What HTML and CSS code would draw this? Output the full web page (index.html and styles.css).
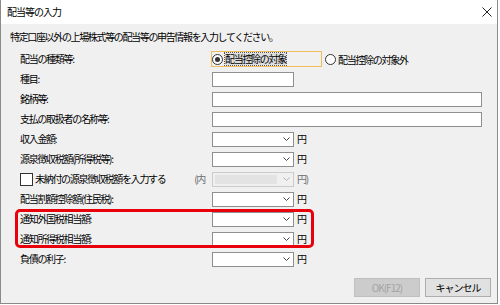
FILE: index.html
```html
<!DOCTYPE html>
<html lang="ja">
<head>
  <meta charset="UTF-8" />
  <title>配当等の入力</title>
  <link rel="stylesheet" href="styles.css">
</head>
<body>
  <div class="window">
    <div class="titlebar">
      <span class="title">配当等の入力</span>
      <span class="close">
        <svg width="10" height="10" viewBox="0 0 10 10"><path d="M0.5 0.5 L9.5 9.5 M9.5 0.5 L0.5 9.5" stroke="#222" stroke-width="1" fill="none"/></svg>
      </span>
    </div>

    <div class="client">
      <p class="desc">特定口座以外の上場株式等の配当等の申告情報を入力してください。</p>

      <div class="form">
        <div class="row">
          <div class="lbl">配当の種類等:</div>
          <div class="ctl">
            <span class="radio-box">
              <span class="radio checked"></span>
              <span class="focus-text">配当控除の対象</span>
            </span>
            <span class="radio-item">
              <span class="radio"></span>
              <span>配当控除の対象外</span>
            </span>
          </div>
        </div>

        <div class="row">
          <div class="lbl">種目:</div>
          <div class="ctl"><span class="input short"></span></div>
        </div>

        <div class="row">
          <div class="lbl">銘柄等:</div>
          <div class="ctl"><span class="input long"></span></div>
        </div>

        <div class="row">
          <div class="lbl">支払の取扱者の名称等:</div>
          <div class="ctl"><span class="input long"></span></div>
        </div>

        <div class="row">
          <div class="lbl">収入金額:</div>
          <div class="ctl"><span class="combo"><span class="chev"><svg width="7" height="4" viewBox="0 0 7 4"><polyline points="0.5,0.5 3.5,3.5 6.5,0.5" fill="none" stroke="#444"/></svg></span></span><span class="yen">円</span></div>
        </div>

        <div class="row">
          <div class="lbl">源泉徴収税額(所得税等):</div>
          <div class="ctl"><span class="combo"><span class="chev"><svg width="7" height="4" viewBox="0 0 7 4"><polyline points="0.5,0.5 3.5,3.5 6.5,0.5" fill="none" stroke="#444"/></svg></span></span><span class="yen">円</span></div>
        </div>

        <div class="row">
          <div class="lbl check-lbl">
            <span class="checkbox"></span>
            <span>未納付の源泉徴収税額を入力する</span>
            <span class="inner">(内</span>
          </div>
          <div class="ctl"><span class="combo disabled"><span class="fill"></span><span class="chev"><svg width="7" height="4" viewBox="0 0 7 4"><polyline points="0.5,0.5 3.5,3.5 6.5,0.5" fill="none" stroke="#b5b5b5"/></svg></span></span><span class="yen muted">円)</span></div>
        </div>

        <div class="row">
          <div class="lbl">配当割額控除額(住民税):</div>
          <div class="ctl"><span class="combo"><span class="chev"><svg width="7" height="4" viewBox="0 0 7 4"><polyline points="0.5,0.5 3.5,3.5 6.5,0.5" fill="none" stroke="#444"/></svg></span></span><span class="yen">円</span></div>
        </div>

        <div class="row">
          <div class="lbl">通知外国税相当額:</div>
          <div class="ctl"><span class="combo"><span class="chev"><svg width="7" height="4" viewBox="0 0 7 4"><polyline points="0.5,0.5 3.5,3.5 6.5,0.5" fill="none" stroke="#444"/></svg></span></span><span class="yen">円</span></div>
        </div>

        <div class="row">
          <div class="lbl">通知所得税相当額:</div>
          <div class="ctl"><span class="combo"><span class="chev"><svg width="7" height="4" viewBox="0 0 7 4"><polyline points="0.5,0.5 3.5,3.5 6.5,0.5" fill="none" stroke="#444"/></svg></span></span><span class="yen">円</span></div>
        </div>

        <div class="row">
          <div class="lbl">負債の利子:</div>
          <div class="ctl"><span class="combo"><span class="chev"><svg width="7" height="4" viewBox="0 0 7 4"><polyline points="0.5,0.5 3.5,3.5 6.5,0.5" fill="none" stroke="#444"/></svg></span></span><span class="yen">円</span></div>
        </div>

        <!-- annotation around the two tax rows -->
        <div class="mark"></div>
      </div>

      <div class="buttons">
        <button class="btn" disabled>OK(F12)</button>
        <button class="btn">キャンセル</button>
      </div>
    </div>
  </div>
</body>
</html>
```

FILE: styles.css
```css
body {
  margin: 0;
  background-color: #ffffff;
  font-family: "Noto Sans CJK JP", "Noto Sans", sans-serif;
  font-size: 10px;
  letter-spacing: -1.3px;
  color: #000;
}

.window {
  width: 496px;
  height: 303px;
  border: 1px solid #8a8a8a;
  border-top: none;
  background-color: #f0f0f0;
  display: flex;
  flex-direction: column;
}

.titlebar {
  height: 24px;
  background-color: #ffffff;
  display: flex;
  align-items: center;
  justify-content: space-between;
  padding: 0 5px 0 6px;
}

.title {
  line-height: 14px;
  letter-spacing: -1px;
}

.close {
  display: flex;
  width: 10px;
  height: 10px;
}

.client {
  flex: 1;
  display: flex;
  flex-direction: column;
}

.desc {
  margin: 6px 0 0 9px;
  line-height: 14px;
  letter-spacing: -1.35px;
}

.form {
  position: relative;
  margin-top: 5px;
  padding-left: 19px;
}

.row {
  display: grid;
  grid-template-columns: 192px 1fr;
  height: 20px;
  align-items: center;
}

.lbl {
  line-height: 14px;
  white-space: nowrap;
}

.ctl {
  display: flex;
  align-items: center;
}

.input,
.combo {
  display: block;
  box-sizing: border-box;
  height: 15px;
  background-color: #fff;
  border: 1px solid #8f8f8f;
}

.short,
.combo {
  width: 82px;
}

.long {
  width: 270px;
}

.combo {
  position: relative;
  display: flex;
  align-items: center;
  justify-content: flex-end;
  padding-right: 3px;
}

.chev {
  display: flex;
}

.combo.disabled {
  background-color: #f0f0f0;
  border-color: #cccccc;
}

.combo .fill {
  position: absolute;
  left: 2px;
  top: 2px;
  bottom: 2px;
  width: 62px;
  background-color: #e3e3e3;
}

.yen {
  margin-left: 3px;
  line-height: 14px;
}

.muted,
.inner {
  color: #6d6d6d;
}

.check-lbl {
  display: flex;
  align-items: center;
  padding-right: 7px;
}

.checkbox {
  width: 11px;
  height: 11px;
  border: 1px solid #333;
  background-color: #fff;
  margin-right: 2px;
}

.inner {
  margin-left: auto;
}

.radio-box {
  display: flex;
  align-items: center;
  box-sizing: border-box;
  width: 111px;
  height: 16px;
  margin-left: -1px;
  border: 1px solid #efbd5a;
  line-height: 12px;
}

.radio-item {
  display: flex;
  align-items: center;
  margin-left: 3px;
}

.radio {
  position: relative;
  box-sizing: border-box;
  width: 11px;
  height: 11px;
  border: 1px solid #333;
  border-radius: 50%;
  background-color: #fff;
  margin-right: 2px;
}

.radio.checked::after {
  content: "";
  position: absolute;
  left: 2px;
  top: 2px;
  width: 5px;
  height: 5px;
  border-radius: 50%;
  background-color: #333;
}

.focus-text {
  outline: 1px dotted #555;
  background-color: #dedede;
}

.mark {
  position: absolute;
  left: 14px;
  top: 160px;
  width: 299px;
  height: 39px;
  box-sizing: border-box;
  border: 3px solid #e8000b;
  border-radius: 5px;
  pointer-events: none;
}

.buttons {
  display: flex;
  justify-content: flex-end;
  gap: 5px;
  margin-top: 9px;
  padding-right: 6px;
}

.btn {
  width: 66px;
  height: 19px;
  padding: 0;
  font-family: inherit;
  font-size: 10px;
  letter-spacing: -1px;
  color: #000;
  background-color: #e1e1e1;
  border: 1px solid #adadad;
}

.btn:disabled {
  color: #a3a3a3;
  background-color: #cccccc;
  border-color: #bfbfbf;
}
```
